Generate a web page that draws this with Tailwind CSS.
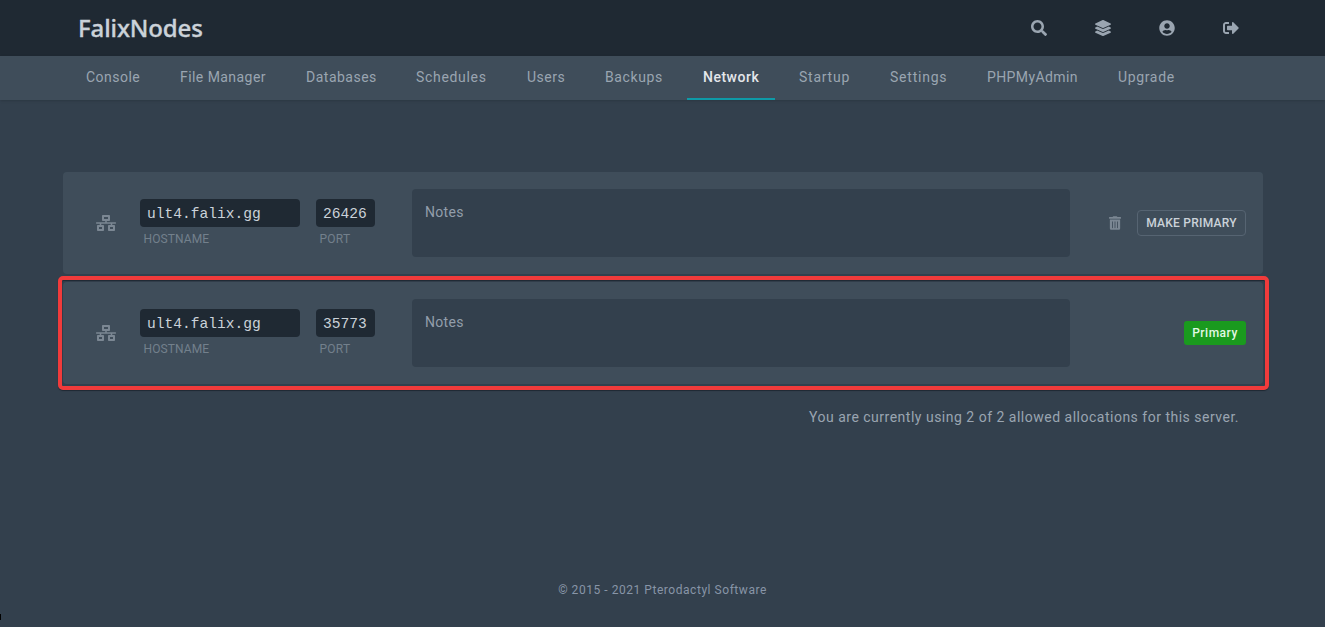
<!DOCTYPE html>
<html lang="en">
<head>
<meta charset="utf-8">
<title>FalixNodes</title>
<script src="https://cdn.jsdelivr.net/npm/@tailwindcss/browser@4"></script>
</head>
<body class="h-[627px] overflow-hidden bg-[#33404d] font-[Roboto,sans-serif] text-[#9aa5b1]">
<div class="relative flex h-full flex-col">
  <header class="flex h-14 shrink-0 items-center justify-between bg-[#1f2933] pl-[78px] pr-[62px]">
    <a class="font-['Noto_Sans',sans-serif] text-[24px] leading-8 font-medium tracking-[-0.12px] whitespace-nowrap text-[#cbd2d9] [-webkit-text-stroke:0.35px_#cbd2d9]">FalixNodes</a>
    <div class="flex">
      <a class="flex w-16 justify-center"><svg class="size-4" viewBox="0 0 512 512" fill="currentColor"><path d="M505 442.7L405.3 343c-4.500-4.500-10.600-7-17-7H372c27.600-35.300 44-79.700 44-128C416 93.100 322.900 0 208 0S0 93.100 0 208s93.100 208 208 208c48.300 0 92.700-16.400 128-44v16.300c0 6.400 2.500 12.500 7 17l99.700 99.700c9.400 9.400 24.600 9.400 33.900 0l28.300-28.300c9.400-9.400 9.400-24.600.1-34zM208 336c-70.700 0-128-57.200-128-128 0-70.700 57.200-128 128-128 70.700 0 128 57.200 128 128 0 70.700-57.200 128-128 128z"/></svg></a>
      <a class="flex w-16 justify-center"><svg class="size-4" viewBox="0 0 512 512" fill="currentColor"><path d="M12.400 148l232.900 105.700c6.800 3.100 14.500 3.100 21.300 0L499.600 148c16.600-7.500 16.600-32.500 0-40L266.700 2.300a25.600 25.600 0 0 0-21.300 0L12.400 108c-16.600 7.500-16.600 32.500 0 40zM499.600 236.300l-58.100-26.300-161.600 73.300c-7.600 3.400-15.600 5.200-23.900 5.200s-16.300-1.700-23.900-5.200L70.500 210l-58.100 26.300c-16.600 7.500-16.600 32.500 0 40l232.900 105.600c6.800 3.100 14.500 3.100 21.300 0L499.600 276.300c16.600-7.500 16.600-32.500 0-40zM499.600 364.100l-57.900-26.200-161.800 73.400c-7.600 3.400-15.600 5.200-23.900 5.200s-16.300-1.700-23.900-5.200L70.300 337.900l-57.900 26.200c-16.600 7.500-16.600 32.500 0 40l232.900 105.600c6.800 3.100 14.500 3.100 21.300 0L499.600 404.100c16.600-7.500 16.600-32.500 0-40z"/></svg></a>
      <a class="flex w-16 justify-center"><svg class="size-4" viewBox="0 0 496 512" fill="currentColor"><path d="M248 8C111 8 0 119 0 256s111 248 248 248 248-111 248-248S385 8 248 8zm0 96c48.600 0 88 39.400 88 88s-39.400 88-88 88-88-39.400-88-88 39.400-88 88-88zm0 344c-58.700 0-111.300-26.600-146.500-68.200 18.800-35.400 55.600-59.800 98.500-59.800 2.400 0 4.800.4 7.100 1.100 13 4.200 26.600 6.900 40.900 6.900 14.300 0 28-2.700 40.900-6.900 2.300-.7 4.700-1.100 7.100-1.100 42.900 0 79.700 24.400 98.500 59.800C359.300 421.400 306.700 448 248 448z"/></svg></a>
      <a class="flex w-16 justify-center"><svg class="size-4" viewBox="0 0 512 512" fill="currentColor"><path d="M497 273L329 441c-15 15-41 4.500-41-17v-96H152c-13.300 0-24-10.700-24-24v-96c0-13.300 10.700-24 24-24h136V88c0-21.400 25.900-32 41-17l168 168c9.300 9.400 9.300 24.600 0 34zM192 436v-40c0-6.600-5.400-12-12-12H96c-17.700 0-32-14.300-32-32V160c0-17.700 14.300-32 32-32h84c6.600 0 12-5.400 12-12V76c0-6.600-5.400-12-12-12H96c-53 0-96 43-96 96v192c0 53 43 96 96 96h84c6.600 0 12-5.400 12-12z"/></svg></a>
    </div>
  </header>
  <nav class="flex h-11 shrink-0 gap-2 bg-[#3f4d5a] pl-[70px] text-sm leading-[43px] whitespace-nowrap shadow-sm">
    <a class="w-[86px] pl-4 tracking-[0.47px]">Console</a>
    <a class="w-[118px] pl-4 tracking-[0.44px]">File Manager</a>
    <a class="w-[103px] pl-4 tracking-[0.5px]">Databases</a>
    <a class="w-[103px] pl-[15px] tracking-[0.68px]">Schedules</a>
    <a class="w-[70px] pl-[15px] tracking-[0.5px]">Users</a>
    <a class="w-[89px] pl-[15px] tracking-[0.6px]">Backups</a>
    <a class="w-[88px] border-b-2 border-[#0e9aa7] pl-4 font-medium tracking-[0.5px] text-[#e4e7eb]">Network</a>
    <a class="w-[83px] pl-4 tracking-[0.75px]">Startup</a>
    <a class="w-[89px] pl-4 tracking-[0.78px]">Settings</a>
    <a class="w-[123px] pl-4 tracking-[0.4px]">PHPMyAdmin</a>
    <a class="w-[89px] pl-4 tracking-[0.65px]">Upgrade</a>
  </nav>
  <main class="mt-[72px] ml-[63px] flex w-[1200px] flex-col gap-2">
    <section class="flex h-[102px] items-center rounded bg-[#3f4d5a] pr-[17px] pl-[33px]">
      <svg class="h-4 w-5 shrink-0 text-[#7b8793]" viewBox="0 0 640 512" fill="currentColor"><path d="M640 264v-16c0-8.840-7.160-16-16-16H344v-40h72c17.670 0 32-14.330 32-32V32c0-17.670-14.330-32-32-32H224c-17.670 0-32 14.330-32 32v128c0 17.670 14.330 32 32 32h72v40H16c-8.840 0-16 7.160-16 16v16c0 8.840 7.160 16 16 16h104v40H64c-17.670 0-32 14.330-32 32v128c0 17.670 14.330 32 32 32h160c17.670 0 32-14.330 32-32V352c0-17.670-14.330-32-32-32h-56v-40h304v40h-56c-17.670 0-32 14.330-32 32v128c0 17.670 14.330 32 32 32h160c17.670 0 32-14.330 32-32V352c0-17.670-14.330-32-32-32h-56v-40h104c8.840 0 16-7.160 16-16zM256 128V64h128v64H256zm-64 320H96v-64h96v64zm352 0h-96v-64h96v64z"/></svg>
      <div class="ml-6 w-40">
        <div class="h-7 rounded bg-[#1f2933] pl-[7px] font-['Liberation_Mono',monospace] text-[14.6px] leading-[30px] text-[#cbd2d9]">ult4.falix.gg</div>
        <div class="mt-1 pl-[3.500px] text-xs leading-4 tracking-[0.1px] text-[#73808c]">HOSTNAME</div>
      </div>
      <div class="ml-4 w-[59px]">
        <div class="h-7 rounded bg-[#1f2933] pl-[7px] font-['Liberation_Mono',monospace] text-[14.6px] leading-[30px] text-[#cbd2d9]">26426</div>
        <div class="mt-1 pl-[3.500px] text-xs leading-4 tracking-[0.25px] text-[#73808c]">PORT</div>
      </div>
      <div class="ml-[37px] h-[68px] w-[658px] rounded bg-[#33404d] px-[13px] py-[13px] text-sm leading-5 tracking-[0.3px] text-[#929eab]">Notes</div>
      <div class="flex flex-1 items-center justify-end gap-4">
        <svg class="h-[14px] w-3 text-[#7b8793]" viewBox="0 0 448 512" fill="currentColor"><path d="M32 464a48 48 0 0 0 48 48h288a48 48 0 0 0 48-48V128H32zm272-256a16 16 0 0 1 32 0v224a16 16 0 0 1-32 0zm-96 0a16 16 0 0 1 32 0v224a16 16 0 0 1-32 0zm-96 0a16 16 0 0 1 32 0v224a16 16 0 0 1-32 0zM432 32H312l-9.400-18.700A24 24 0 0 0 281.100 0H166.800a23.720 23.720 0 0 0-21.400 13.300L136 32H16A16 16 0 0 0 0 48v32a16 16 0 0 0 16 16h416a16 16 0 0 0 16-16V48a16 16 0 0 0-16-16z"/></svg>
        <button class="h-[26px] w-[109px] rounded border border-[#566472] text-xs leading-6 font-medium tracking-[0.24px] whitespace-nowrap text-[#cbd2d9]">MAKE PRIMARY</button>
      </div>
    </section>
    <section class="flex h-[102px] items-center rounded bg-[#3f4d5a] pr-[17px] pl-[33px]">
      <svg class="h-4 w-5 shrink-0 text-[#7b8793]" viewBox="0 0 640 512" fill="currentColor"><path d="M640 264v-16c0-8.840-7.160-16-16-16H344v-40h72c17.670 0 32-14.330 32-32V32c0-17.670-14.330-32-32-32H224c-17.670 0-32 14.330-32 32v128c0 17.670 14.330 32 32 32h72v40H16c-8.840 0-16 7.160-16 16v16c0 8.840 7.160 16 16 16h104v40H64c-17.670 0-32 14.330-32 32v128c0 17.670 14.330 32 32 32h160c17.670 0 32-14.330 32-32V352c0-17.670-14.330-32-32-32h-56v-40h304v40h-56c-17.670 0-32 14.330-32 32v128c0 17.670 14.330 32 32 32h160c17.670 0 32-14.330 32-32V352c0-17.670-14.330-32-32-32h-56v-40h104c8.840 0 16-7.160 16-16zM256 128V64h128v64H256zm-64 320H96v-64h96v64zm352 0h-96v-64h96v64z"/></svg>
      <div class="ml-6 w-40">
        <div class="h-7 rounded bg-[#1f2933] pl-[7px] font-['Liberation_Mono',monospace] text-[14.6px] leading-[30px] text-[#cbd2d9]">ult4.falix.gg</div>
        <div class="mt-1 pl-[3.500px] text-xs leading-4 tracking-[0.1px] text-[#73808c]">HOSTNAME</div>
      </div>
      <div class="ml-4 w-[59px]">
        <div class="h-7 rounded bg-[#1f2933] pl-[7px] font-['Liberation_Mono',monospace] text-[14.6px] leading-[30px] text-[#cbd2d9]">35773</div>
        <div class="mt-1 pl-[3.500px] text-xs leading-4 tracking-[0.25px] text-[#73808c]">PORT</div>
      </div>
      <div class="ml-[37px] h-[68px] w-[658px] rounded bg-[#33404d] px-[13px] py-[13px] text-sm leading-5 tracking-[0.3px] text-[#929eab]">Notes</div>
      <div class="flex flex-1 items-center justify-end">
        <span class="h-6 w-[62px] rounded-[3px] bg-[#1a9a1e] text-center text-xs leading-6 font-medium tracking-[0.5px] text-[#e3f9e5]">Primary</span>
      </div>
    </section>
    <p class="mt-[15px] pr-6 text-right text-sm leading-5 tracking-[0.5px]">You are currently using 2 of 2 allowed allocations for this server.</p>
  </main>
  <footer class="mt-[155px] text-center text-xs leading-4 tracking-[0.54px] text-[#8895a7]">© 2015 - 2021 Pterodactyl Software</footer>
  <div class="absolute top-[276px] left-[58px] h-[114px] w-[1211px] rounded-[5px] border-4 border-[#f13b3b] shadow-[0_1px_1px_#1f2933,inset_0_1px_1px_#1f2933]"></div>
  <div class="absolute top-[614px] left-0 h-[6px] w-px bg-black"></div>
</div>
</body>
</html>
